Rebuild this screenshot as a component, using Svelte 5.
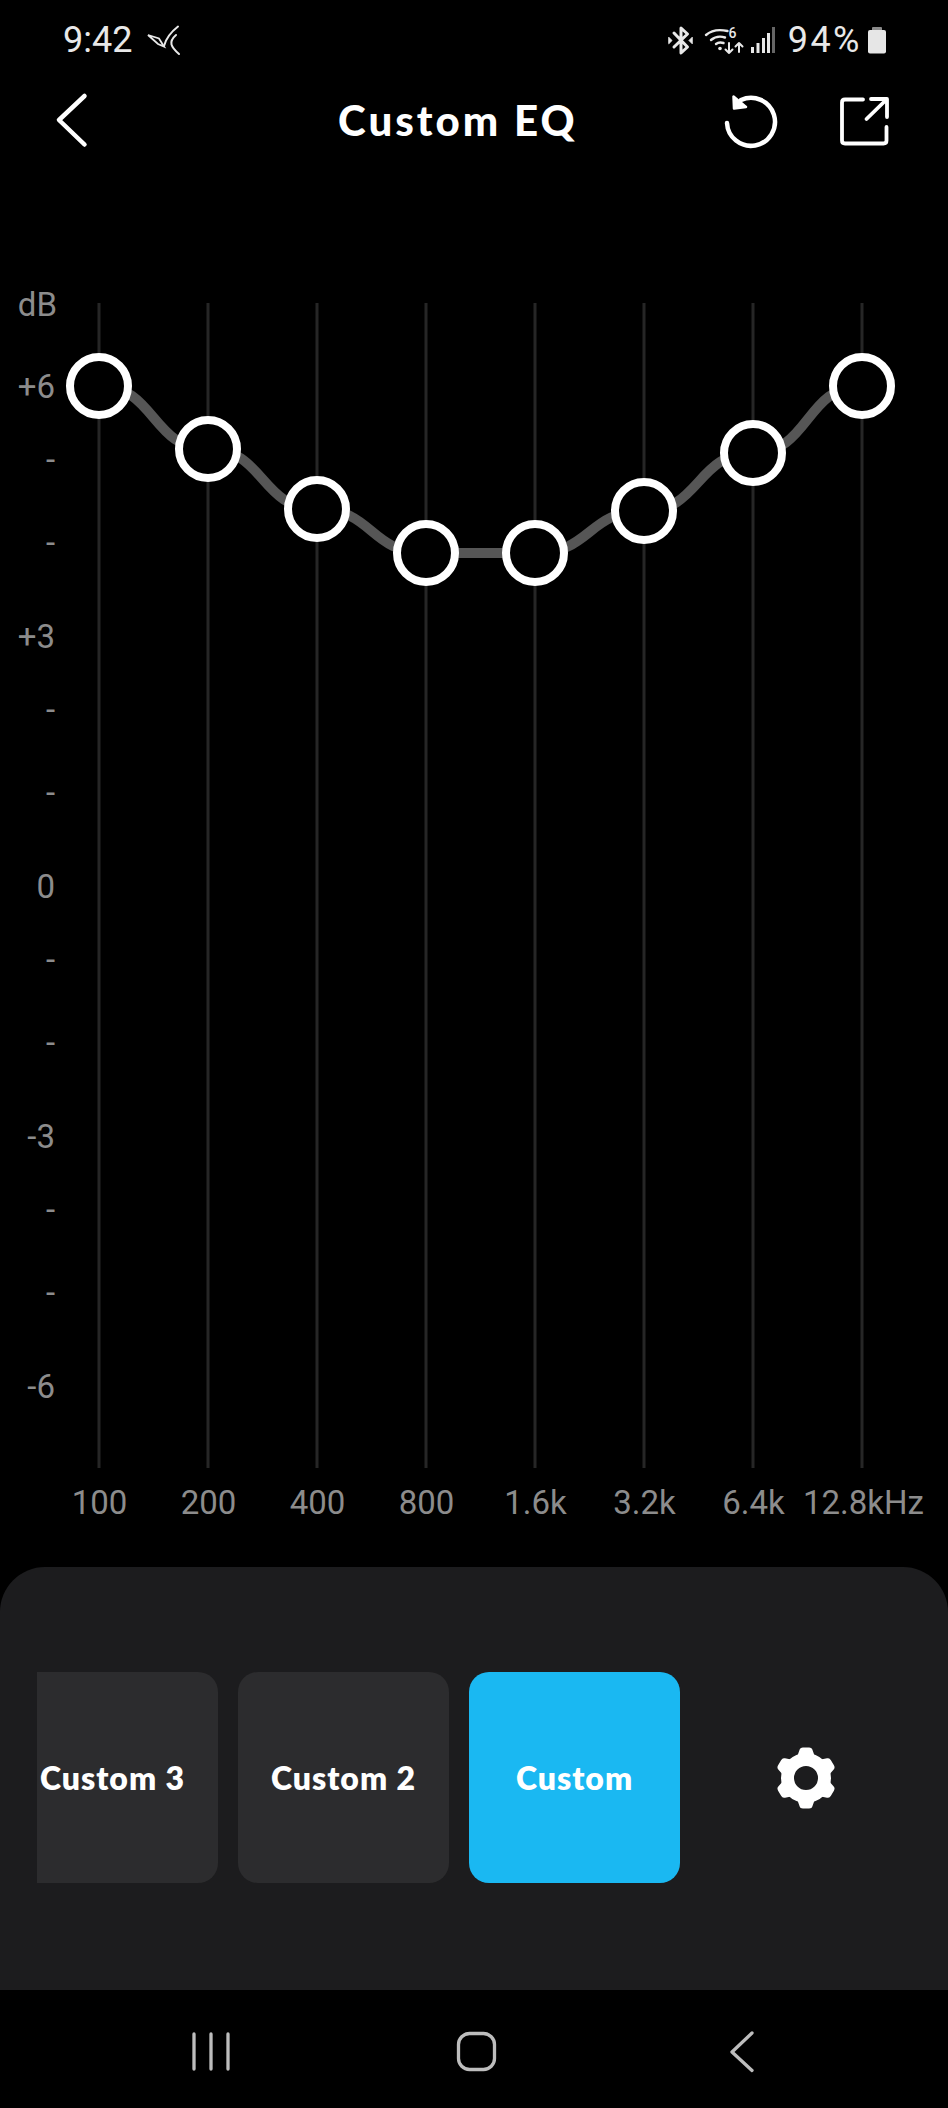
<script lang="ts">
  const bandX = [99, 208, 317, 426, 535, 644, 753, 862]
  const bandY = [386, 449, 509, 553, 553, 511, 453, 386]
  const freqs = ['100', '200', '400', '800', '1.6k', '3.2k', '6.4k', '12.8kHz']
  const ticks = ['+6', '-', '-', '+3', '-', '-', '0', '-', '-', '-3', '-', '-', '-6']
  const presets = ['Custom 3', 'Custom 2', 'Custom']

  // flat tangent at every knob
  function curvePath(xs: number[], ys: number[]) {
    let d = `M${xs[0]} ${ys[0]}`
    for (let i = 1; i < xs.length; i++) {
      const h = (xs[i] - xs[i - 1]) * 0.52
      d += ` C${xs[i - 1] + h} ${ys[i - 1]} ${xs[i] - h} ${ys[i]} ${xs[i]} ${ys[i]}`
    }
    return d
  }

  const curve = curvePath(bandX, bandY)
</script>

<div class="page">
  <div class="status">
    <div class="status-left">
      <span class="status-text">9:42</span>
      <svg class="bird" viewBox="144 24 36 32" width="36" height="32" fill="none" stroke="#e8e8e8" stroke-linecap="round">
        <path d="M147 35 L158 38.500 L163 46.500 L157 44 Z" stroke-width="1.800" />
        <path d="M163 46 C165 38 170 32 177 26.500" stroke-width="2" />
        <path d="M175 35 C167 42 170 47 178 54" stroke-width="2" />
      </svg>
    </div>
    <div class="status-right">
      <svg class="net" viewBox="668 24 110 32" width="110" height="32" fill="none" stroke="#e8e8e8" stroke-linecap="round" stroke-linejoin="round">
        <path d="M675 33 L688.500 47 L682 53 V28 L688.500 34 L675 47" stroke-width="3" />
        <path d="M670 37.500 L673 40.500 L670 43.500 Z M693 37.500 L690 40.500 L693 43.500 Z" fill="#e8e8e8" stroke-width="1" />
        <path d="M707 35 Q715 28 728.500 31" stroke-width="2.400" />
        <path d="M712 40 Q718 35 726 37.500" stroke-width="2.400" />
        <path d="M717 44 Q720 41.500 724.500 43" stroke-width="2.400" />
        <circle cx="721" cy="48.500" r="1.800" fill="#e8e8e8" stroke="none" />
        <path d="M730 43 V53 M726.500 49.500 L730 53 L733.500 49.500" stroke-width="2" />
        <path d="M740 52 V43 M736.500 46.500 L740 43 L743.500 46.500" stroke-width="2" />
        <text class="wifi-six" x="733.500" y="38" text-anchor="middle">6</text>
        <g stroke="none" fill="#e8e8e8">
          <rect x="752" y="47" width="3" height="6" />
          <rect x="757.500" y="43" width="3" height="10" />
          <rect x="763" y="38" width="3" height="15" />
          <rect x="768" y="33" width="3" height="20" />
          <rect x="773" y="27" width="3" height="26" fill="#666" />
        </g>
      </svg>
      <span class="status-text pct">94%</span>
      <svg class="battery" viewBox="867 25 20 30" width="20" height="30">
        <rect x="872" y="27" width="10" height="4" rx="1" fill="#8a8a8a" />
        <rect x="868" y="30" width="18" height="23.500" rx="2" fill="#e6e6e6" />
      </svg>
    </div>
  </div>

  <header class="bar">
    <svg class="back" viewBox="52 90 38 60" width="38" height="60" fill="none" stroke="#fff" stroke-width="4.500" stroke-linecap="round" stroke-linejoin="round">
      <path d="M84.500 96 L59 120 L84.500 144.500" />
    </svg>
    <h1>Custom EQ</h1>
    <div class="actions">
      <svg viewBox="722 88 60 60" width="60" height="60" fill="none" stroke="#fff" stroke-width="4.500" stroke-linecap="round" stroke-linejoin="round">
        <path d="M727 121 A24 24 0 1 0 741 98" />
        <path d="M733.500 94.500 L734 106.500 L746 105 Z" fill="#fff" stroke-width="2.500" />
      </svg>
      <svg viewBox="838 92 54 54" width="54" height="54" fill="none" stroke="#fff" stroke-width="3.800" stroke-linecap="round" stroke-linejoin="round">
        <path d="M863 98.500 H845 Q842 98.500 842 101.500 V139.500 Q842 142.500 845 142.500 H883.500 Q886.500 142.500 886.500 139.500 V126" />
        <path d="M866.500 118 L886.500 98.500 M871 98 H887 V116" />
      </svg>
    </div>
  </header>

  <section class="chart">
    <div class="axis">
      <span>dB</span>
      {#each ticks as tick}
        <span>{tick}</span>
      {/each}
    </div>
    <svg class="plot" viewBox="56 303 892 1165" width="892" height="1165">
      {#each bandX as x}
        <line class="band" x1={x} x2={x} y1="303" y2="1468" />
      {/each}
      <path class="curve" d={curve} />
      {#each bandX as x, i}
        <circle class="knob" cx={x} cy={bandY[i]} r="29" />
      {/each}
    </svg>
  </section>

  <div class="freqs">
    {#each freqs as freq}
      <span>{freq}</span>
    {/each}
  </div>

  <section class="panel">
    <div class="presets">
      <div class="preset-track">
        {#each presets as preset}
          <button type="button" class="preset" class:active={preset === 'Custom'}>{preset}</button>
        {/each}
      </div>
    </div>
    <div class="gear">
      <svg viewBox="-32 -32 64 64" width="64" height="64" fill="#fff" stroke="none">
        <path fill-rule="evenodd" d="M0 -25 A25 25 0 1 1 0 25 A25 25 0 1 1 0 -25 Z M0 -12 A12 12 0 1 0 0 12 A12 12 0 1 0 0 -12 Z" />
        {#each [0, 60, 120, 180, 240, 300] as angle}
          <path d="M-9 -21 L-6.500 -28 Q-6 -30.500 -3 -30.500 H3 Q6 -30.500 6.500 -28 L9 -21 Z" transform="rotate({angle})" />
        {/each}
      </svg>
    </div>
  </section>

  <nav class="nav">
    <svg viewBox="180 2026 600 60" width="600" height="60" fill="none" stroke="#bdbdbd" stroke-width="3.300" stroke-linecap="round" stroke-linejoin="round">
      <path d="M194 2034 V2069 M211 2034 V2069 M228 2034 V2069" />
      <rect x="458.500" y="2033.500" width="36" height="36" rx="11" />
      <path d="M752 2033 L732 2052 L752 2070.500" />
    </svg>
  </nav>
</div>

<style>
  :global(body) {
    background: #000;
  }
  .page {
    display: flex;
    flex-direction: column;
    width: 948px;
    height: 2108px;
    background: #000;
    font-family: Roboto, sans-serif;
    overflow: hidden;
  }
  .status {
    display: flex;
    justify-content: space-between;
    align-items: center;
    height: 80px;
    flex-shrink: 0;
    padding: 0 61px 0 63px;
    box-sizing: border-box;
  }
  .status-left,
  .status-right {
    display: flex;
    align-items: center;
  }
  .status-text {
    font-size: 36px;
    line-height: 80px;
    color: #e8e8e8;
  }
  .bird {
    margin-left: 13px;
  }
  .net {
    margin-right: 11px;
  }
  .pct {
    margin-right: 5px;
    letter-spacing: 2.500px;
  }
  .wifi-six {
    font-family: Roboto, sans-serif;
    font-size: 14px;
    font-weight: 500;
    fill: #e8e8e8;
    stroke: none;
  }
  .bar {
    display: flex;
    align-items: center;
    height: 80px;
    flex-shrink: 0;
    padding: 0 56px 0 52px;
    box-sizing: border-box;
  }
  .back {
    flex-shrink: 0;
  }
  h1 {
    margin: 0 0 0 248px;
    font-family: Lato, sans-serif;
    font-size: 42px;
    font-weight: 900;
    letter-spacing: 3px;
    line-height: 80px;
    color: #fff;
    white-space: nowrap;
  }
  .actions {
    display: flex;
    align-items: center;
    gap: 56px;
    margin-left: auto;
  }
  .chart {
    display: grid;
    grid-template-columns: 56px 892px;
    margin-top: 143px;
  }
  .axis {
    display: grid;
    grid-template-rows: 82px repeat(4, 73px 83px 94px) 40px;
    height: 1181px;
    margin-top: -16px;
    justify-items: end;
    padding-right: 1px;
    font-size: 33px;
    line-height: 36px;
    color: #8c8c8c;
  }
  .axis span:first-child {
    margin-right: -2px;
  }
  .plot {
    display: block;
    align-self: start;
  }
  .band {
    stroke: #262626;
    stroke-width: 3;
  }
  .curve {
    fill: none;
    stroke: #565656;
    stroke-width: 10;
  }
  .knob {
    fill: #000;
    stroke: #fff;
    stroke-width: 8;
  }
  .freqs {
    display: flex;
    flex-shrink: 0;
    margin-top: 17px;
    padding-left: 45px;
    font-size: 33px;
    line-height: 36px;
    color: #8c8c8c;
  }
  .freqs span {
    width: 109px;
    text-align: center;
    white-space: nowrap;
  }
  .freqs span:last-child {
    margin-left: -5px;
  }
  .panel {
    display: flex;
    flex: 1;
    align-items: flex-start;
    margin-top: 46px;
    padding: 105px 0 0 37px;
    background: #1c1c1e;
    border-radius: 45px 45px 0 0;
  }
  .presets {
    width: 643px;
    flex-shrink: 0;
    overflow: hidden;
  }
  .preset-track {
    display: flex;
    gap: 20px;
    margin-left: -30px;
  }
  .preset {
    width: 211px;
    height: 211px;
    flex-shrink: 0;
    padding: 0;
    border: none;
    border-radius: 20px;
    background: #2c2c2e;
    color: #fff;
    font-family: Lato, sans-serif;
    font-size: 32px;
    font-weight: 800;
    letter-spacing: 1px;
  }
  .preset.active {
    background: #1ab8f2;
  }
  .gear {
    display: flex;
    flex: 1;
    align-items: center;
    justify-content: center;
    height: 211px;
    padding-right: 16px;
  }
  .nav {
    flex-shrink: 0;
    height: 118px;
    padding: 36px 0 0 180px;
    box-sizing: border-box;
    background: #000;
  }
  .nav svg {
    display: block;
  }
</style>
